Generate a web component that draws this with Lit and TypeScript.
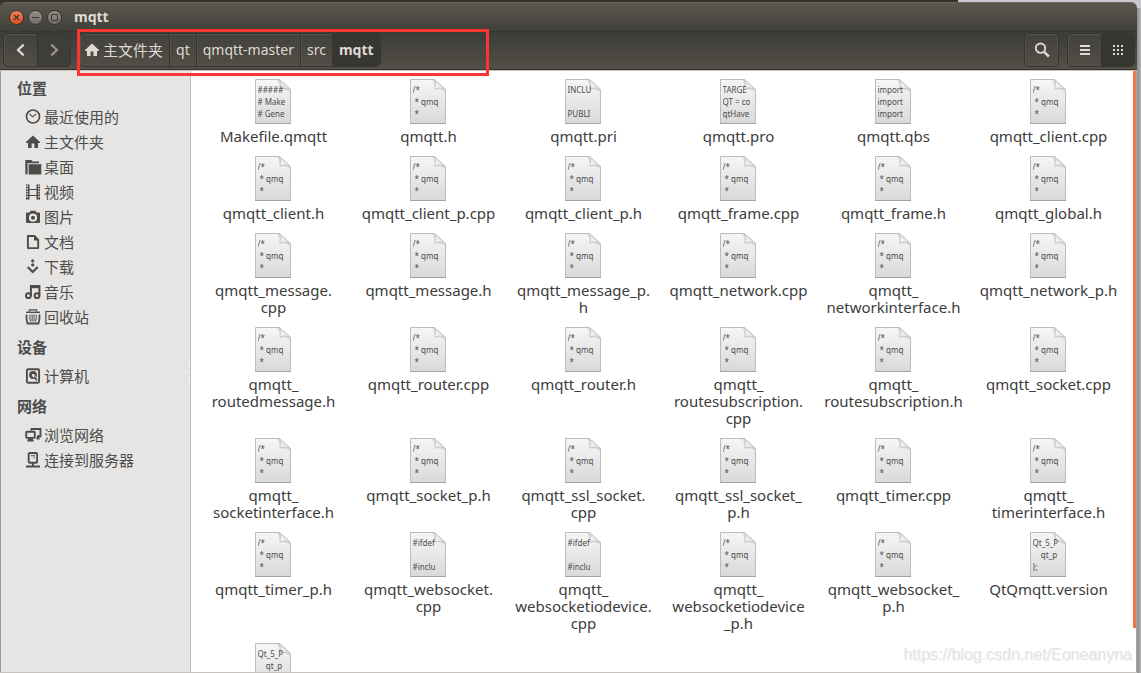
import { LitElement, html, svg, css, nothing } from "lit";
import type { TemplateResult } from "lit";
import { customElement, property } from "lit/decorators.js";
import { classMap } from "lit/directives/class-map.js";

const COMMENT = "/*\n * qmq\n *";

const FILES: { name: string; preview?: string }[] = [
  { name: "Makefile.qmqtt", preview: "#####\n# Make\n# Gene" },
  { name: "qmqtt.h" },
  { name: "qmqtt.pri", preview: "INCLU\n\nPUBLI" },
  { name: "qmqtt.pro", preview: "TARGE\nQT = co\nqtHave" },
  { name: "qmqtt.qbs", preview: "import\nimport\nimport" },
  { name: "qmqtt_client.cpp" },
  { name: "qmqtt_client.h" },
  { name: "qmqtt_client_p.cpp" },
  { name: "qmqtt_client_p.h" },
  { name: "qmqtt_frame.cpp" },
  { name: "qmqtt_frame.h" },
  { name: "qmqtt_global.h" },
  { name: "qmqtt_message.\ncpp" },
  { name: "qmqtt_message.h" },
  { name: "qmqtt_message_p.\nh" },
  { name: "qmqtt_network.cpp" },
  { name: "qmqtt_\nnetworkinterface.h" },
  { name: "qmqtt_network_p.h" },
  { name: "qmqtt_\nroutedmessage.h" },
  { name: "qmqtt_router.cpp" },
  { name: "qmqtt_router.h" },
  { name: "qmqtt_\nroutesubscription.\ncpp" },
  { name: "qmqtt_\nroutesubscription.h" },
  { name: "qmqtt_socket.cpp" },
  { name: "qmqtt_\nsocketinterface.h" },
  { name: "qmqtt_socket_p.h" },
  { name: "qmqtt_ssl_socket.\ncpp" },
  { name: "qmqtt_ssl_socket_\np.h" },
  { name: "qmqtt_timer.cpp" },
  { name: "qmqtt_\ntimerinterface.h" },
  { name: "qmqtt_timer_p.h" },
  { name: "qmqtt_websocket.\ncpp", preview: "#ifdef\n\n#inclu" },
  { name: "qmqtt_\nwebsocketiodevice.\ncpp", preview: "#ifdef\n\n#inclu" },
  { name: "qmqtt_\nwebsocketiodevice\n_p.h" },
  { name: "qmqtt_websocket_\np.h" },
  { name: "QtQmqtt.version", preview: "Qt_5_P\n    qt_p\n};" },
  { name: "", preview: "Qt_5_P\n    qt_p\n};" },
];

const ICONS: Record<string, TemplateResult> = {
  home: svg`<path fill="currentColor" d="M8 1.600 1 8v1h2v5h3.600V9.600h2.800V14H13V9h2V8z"/>`,
  recent: svg`<circle cx="8" cy="7.500" r="6.500" fill="none" stroke="currentColor" stroke-width="1.700"/><path d="M4.500 5 7.800 7.800 11 5" fill="none" stroke="currentColor" stroke-width="1.100"/>`,
  desktop: svg`<path fill="currentColor" d="M.3 1h6.200l1 1.600H14v1.600H2.600v11H.3z"/><path fill="currentColor" d="M3.600 5.200H16.300v10.300H3.600z"/>`,
  video: svg`<path fill="currentColor" fill-rule="evenodd" d="M1 .500h3.500v15H1zM1.500 1.500v1.500h1.500V1.500zm0 2.600v1.500h1.500V4.100zm0 2.600v1.500h1.500V6.700zm0 2.600v1.500h1.500V9.300zm0 2.600v1.500h1.500v-1.500zM11.500.500H15v15h-3.500zM13 1.500v1.500h1.500V1.500zm0 2.600v1.500h1.500V4.100zm0 2.600v1.500h1.500V6.700zm0 2.600v1.500h1.500V9.300zm0 2.600v1.500h1.500v-1.500z"/><path fill="currentColor" d="M4 5h8v1H4zM4 11h8v1H4z"/>`,
  camera: svg`<path fill="currentColor" fill-rule="evenodd" d="M5.500 1.800h5L11.500 3.600H14q1 0 1 1V13q0 1-1 1H2q-1 0-1-1V4.600q0-1 1-1h2.500zM8 4.600a4.100 4.100 0 1 0 0 8.200 4.100 4.100 0 0 0 0-8.200z"/><circle cx="8" cy="8.700" r="2" fill="currentColor"/>`,
  doc: svg`<path d="M2.900 2h6.600l3.700 3.800v8.300H2.900z" fill="none" stroke="currentColor" stroke-width="1.900" stroke-linejoin="round"/><path fill="currentColor" d="M9 2v4.500h4.500z"/>`,
  download: svg`<circle cx="7.700" cy="1.800" r="1.600" fill="currentColor"/><circle cx="7.700" cy="5.900" r="1.600" fill="currentColor"/><path d="m2.700 8 5 5 5-5" fill="none" stroke="currentColor" stroke-width="2.100"/>`,
  music: svg`<g fill="none" stroke="currentColor" stroke-width="2"><circle cx="3.400" cy="11.700" r="2.400"/><circle cx="12" cy="11.700" r="2.400"/><path d="M5.900 11.700V2h8.500v9.700"/></g><path fill="currentColor" d="M5.900 1.200h8.500v3H5.900z"/>`,
  trash: svg`<path d="M1 4V2.600h14V4z" fill="currentColor"/><path d="M4.500 2.400V.900h7v1.500" fill="none" stroke="currentColor" stroke-width="1.400"/><path d="M1.800 5.600q-1 3 .8 8.900h10.800q1.800-5.900.8-8.900" fill="none" stroke="currentColor" stroke-width="1.800"/><path d="M5 5.500q-.8 3.500.6 7M7.100 5.500v7M9 5.500v7M11.100 5.500q.8 3.500-.6 7" fill="none" stroke="currentColor"/>`,
  disk: svg`<rect x="1.900" y="1.200" width="12.200" height="13.600" rx="1.200" fill="none" stroke="currentColor" stroke-width="1.900"/><circle cx="8" cy="7" r="3.900" fill="currentColor"/><circle cx="8" cy="7" r="1.100" fill="#e6e5e3"/><path d="m7.800 6.800 4 5.200" stroke="#e6e5e3" stroke-width="2.600"/><path d="m9.200 8.700 2.600 3.600" stroke="currentColor" stroke-width="1.800"/>`,
  network: svg`<g fill="none" stroke="currentColor" stroke-width="1.900"><path d="M6.500 3.500V2h9v7.200H12"/><rect x="1.200" y="4.700" width="8.600" height="6.200" rx=".8"/></g><path fill="currentColor" d="M3.500 11h4l1.500 3.500H2zM11.500 10h3v2.500h-3z"/>`,
  server: svg`<rect x="3.700" y="1" width="8.400" height="9.800" rx="1" fill="none" stroke="currentColor" stroke-width="1.900"/><path fill="currentColor" d="M6 3.200h4v1H6zM8.500 5.200H10v1H8.500zM7 11h1.900v3H7zM1 13.500h14v2H1z"/>`,
  back: svg`<path d="M10.700 2.600 5 8l5.700 5.400" fill="none" stroke="currentColor" stroke-width="2.200"/>`,
  forward: svg`<path d="M5.300 2.600 11 8l-5.700 5.400" fill="none" stroke="currentColor" stroke-width="2.200"/>`,
  search: svg`<circle cx="6.500" cy="6.200" r="4.700" fill="none" stroke="currentColor" stroke-width="1.900"/><path d="m10 9.700 4.800 4.800" stroke="currentColor" stroke-width="2.500"/>`,
  list: svg`<path fill="currentColor" d="M3 3h10v2H3zM3 7h10v2H3zM3 11h10v2H3z"/>`,
  grid: svg`<path fill="currentColor" d="M3 3h2v2H3zM7 3h2v2H7zM11 3h2v2h-2zM3 7h2v2H3zM7 7h2v2H7zM11 7h2v2h-2zM3 11h2v2H3zM7 11h2v2H7zM11 11h2v2h-2z"/>`,
};

const icon = (name: string) =>
  html`<svg class="icon" viewBox="0 0 16 16" width="16" height="16" aria-hidden="true">${ICONS[name]}</svg>`;

@customElement("file-tile")
export class FileTile extends LitElement {
  @property() name = "";
  @property() preview = COMMENT;

  static styles = css`
    :host { display: flex; flex-direction: column; align-items: center; padding-bottom: 11px; }
    .page { display: grid; width: 40px; height: 46px; margin-bottom: 3px; }
    .sheet, .preview { grid-area: 1 / 1; }
    .preview {
      width: 27px; height: 36px; margin: 5px 0 0 4px; overflow: hidden; white-space: pre;
      font: 8px/12px "Noto Sans", sans-serif; color: #4c4c4c;
    }
    .name { font: 15px/17px "Noto Sans", sans-serif; color: #3c3c3c; white-space: pre; text-align: center; }
  `;

  render() {
    return html`
      <div class="page">
        <svg class="sheet" viewBox="0 0 38 46" width="38" height="46" aria-hidden="true">
          <defs>
            <linearGradient id="paper" x2="0" y2="1"><stop stop-color="#f6f6f6" /><stop offset="1" stop-color="#d9d9d9" /></linearGradient>
            <linearGradient id="fold" x1="0" y1="1" x2="1" y2="0"><stop stop-color="#fff" /><stop offset="1" stop-color="#d0d0d0" /></linearGradient>
          </defs>
          <path d="M1.500.500h24l11 10v34h-35z" fill="url(#paper)" stroke="#bcbcbc" />
          <path d="M1 44.500h36" stroke="#a2a2a2" />
          <path d="M23 1h3l10.500 9.500v2.500Q31 9 25.500 11 26 4 23 1z" fill="#cfcfcf" opacity=".7" />
          <path d="M25.500.700 36.300 10.500Q31 7.800 26 9.500 27.300 4 25.500.700z" fill="url(#fold)" stroke="#bbb" stroke-width=".6" />
        </svg>
        <div class="preview">${this.preview}</div>
      </div>
      ${this.name ? html`<span class="name">${this.name}</span>` : nothing}
    `;
  }
}

@customElement("places-sidebar")
export class PlacesSidebar extends LitElement {
  private groups = [
    {
      title: "位置",
      items: [
        ["recent", "最近使用的"], ["home", "主文件夹"], ["desktop", "桌面"],
        ["video", "视频"], ["camera", "图片"], ["doc", "文档"],
        ["download", "下载"], ["music", "音乐"], ["trash", "回收站"],
      ],
    },
    { title: "设备", items: [["disk", "计算机"]] },
    { title: "网络", items: [["network", "浏览网络"], ["server", "连接到服务器"]] },
  ];

  static styles = css`
    :host { display: flex; background: #e6e5e3; color: #4c4c4c; border-right: 1px solid #bdbbb8; }
    .places { flex: 1; font: 15px/23px "Noto Sans CJK SC", sans-serif; }
    .title { margin: 0; padding-left: 16px; font-size: 15px; line-height: 34px; font-weight: 700; }
    .items { margin: 0; padding: 0; list-style: none; }
    .place { display: flex; gap: 3px; height: 25px; padding-left: 24px; color: inherit; text-decoration: none; }
    .icon { flex: none; margin-top: 4px; overflow: visible; }
    .grip { align-self: center; width: 1px; height: 32px; background: repeating-linear-gradient(#fff 0 2px, transparent 2px 5px); }
  `;

  render() {
    return html`
      <nav class="places">
        ${this.groups.map(
          (g) => html`
            <h2 class="title">${g.title}</h2>
            <ul class="items">
              ${g.items.map(([i, label]) => html`<li><a class="place" href="#">${icon(i)}<span>${label}</span></a></li>`)}
            </ul>
          `,
        )}
      </nav>
      <div class="grip"></div>
    `;
  }
}

@customElement("app-root")
export class AppRoot extends LitElement {
  private crumbs = ["主文件夹", "qt", "qmqtt-master", "src", "mqtt"];

  static styles = css`
    :host {
      display: block; box-sizing: border-box; height: 100vh; padding: 2px 4px 0 0; overflow: hidden;
      background: linear-gradient(#33322e, #33322e) 0 0 / 84% 8px no-repeat,
        linear-gradient(90deg, #8c8c8c calc(100% - 4px), #b4b4b4) 0 8px / 100% 100% no-repeat,
        #c9c9cd;
      font: 14px/18px "Noto Sans", "Noto Sans CJK SC", sans-serif;
    }
    .window { position: relative; display: flex; flex-direction: column; height: 100%; }
    .titlebar {
      display: flex; align-items: center; gap: 4px; box-sizing: border-box; height: 29px; padding-left: 9px;
      border-radius: 6px 6px 0 0; border-top: 1px solid #68655b;
      background: linear-gradient(#5b584e, #403f3a);
    }
    .dot {
      display: grid; place-items: center; width: 15px; height: 15px; padding: 0; box-sizing: border-box;
      border: 1px solid #35342f; border-radius: 50%; background: linear-gradient(#94928b, #6f6d66); color: #3b3a36;
    }
    .close { background: linear-gradient(#f58058, #e0511f); }
    .heading { margin: 0 0 0 8px; font-size: 14px; font-weight: 700; color: #dfdbd2; }
    .toolbar {
      display: flex; align-items: flex-start; gap: 8px; box-sizing: border-box; height: 39px; padding: 1px 2px 0 3px;
      background: linear-gradient(#3c3b37, #525047); border-bottom: 1px solid #35342f; border-top: 1px solid #393834;
    }
    .group {
      display: flex; box-sizing: border-box; height: 34px; overflow: hidden;
      border: 1px solid #35342f; border-radius: 5px; background: linear-gradient(#43413c, #504e46);
      box-shadow: inset 0 0 0 1px #56534b;
    }
    .spacer { flex: 1; }
    .tool {
      display: flex; align-items: center; justify-content: center; width: 33px; padding: 0;
      border: 0; border-left: 1px solid #35342f; background: none; color: #dfdbd2; font: inherit;
    }
    .tool:first-child { border-left: 0; }
    .muted { color: #9a968c; background: #3f3d38; }
    .crumb { width: auto; padding: 0 6px; gap: 3px; box-shadow: inset 1px 0 #56534b; }
    .crumb:first-child { padding-left: 4px; font-size: 15px; }
    .active { background: #373632; box-shadow: none; }
    .current { font-weight: 700; background: #373632; box-shadow: none; }
    .icon { flex: none; }
    .body { display: flex; flex: 1; min-height: 0; border: solid #c6c3be; border-width: 1px 0; }
    .sidebar { flex: 0 0 191px; box-sizing: border-box; border-left: 1px solid #9c9c9c; }
    .files {
      flex: 1; min-width: 0; overflow: hidden; background: #fff; padding: 8px 0 0 5px;
      display: grid; grid-template-columns: repeat(auto-fill, 155px); align-content: start;
    }
    .scroll { flex: 0 0 4px; background: #fff; border-right: 1px solid #a9a7a3; box-sizing: border-box; }
    .thumb { height: 557px; background: #f07746; }
    .marker {
      position: absolute; left: 77px; top: 27px; width: 412px; height: 47px; box-sizing: border-box;
      border: 3px solid #fb3434; pointer-events: none;
    }
    .watermark {
      position: absolute; right: 5px; bottom: 8px; color: #e4e4e4; text-shadow: 1px 1px #f4f4f4;
      font: 16px/20px "Liberation Sans", sans-serif;
    }
  `;

  render() {
    return html`
      <div class="window">
        <header class="titlebar">
          <button class="dot close" aria-label="关闭"><svg width="7" height="7" viewBox="0 0 7 7"><path d="m1 1 5 5M6 1 1 6" stroke="currentColor" stroke-width="1.300" /></svg></button>
          <button class="dot" aria-label="最小化"><svg width="7" height="7" viewBox="0 0 7 7"><path d="M0 3.500h7" stroke="currentColor" /></svg></button>
          <button class="dot" aria-label="最大化"><svg width="7" height="7" viewBox="0 0 7 7"><path d="M.500.500h6v6h-6z" fill="none" stroke="currentColor" /></svg></button>
          <h1 class="heading">mqtt</h1>
        </header>
        <div class="toolbar">
          <div class="group">
            <button class="tool" aria-label="后退">${icon("back")}</button>
            <button class="tool muted" aria-label="前进">${icon("forward")}</button>
          </div>
          <nav class="group">
            ${this.crumbs.map(
              (c, i) => html`<button class=${classMap({ tool: true, crumb: true, current: i === this.crumbs.length - 1 })}>
                ${i === 0 ? icon("home") : nothing}<span>${c}</span>
              </button>`,
            )}
          </nav>
          <div class="spacer"></div>
          <div class="group"><button class="tool" aria-label="搜索">${icon("search")}</button></div>
          <div class="group">
            <button class="tool" aria-label="列表">${icon("list")}</button>
            <button class="tool active" aria-label="图标">${icon("grid")}</button>
          </div>
        </div>
        <div class="body">
          <places-sidebar class="sidebar"></places-sidebar>
          <main class="files">
            ${FILES.map((f) => html`<file-tile .name=${f.name} .preview=${f.preview ?? COMMENT}></file-tile>`)}
          </main>
          <div class="scroll"><div class="thumb"></div></div>
        </div>
        <div class="marker"></div>
        <div class="watermark">https://blog.csdn.net/Eoneanyna</div>
      </div>
    `;
  }
}
